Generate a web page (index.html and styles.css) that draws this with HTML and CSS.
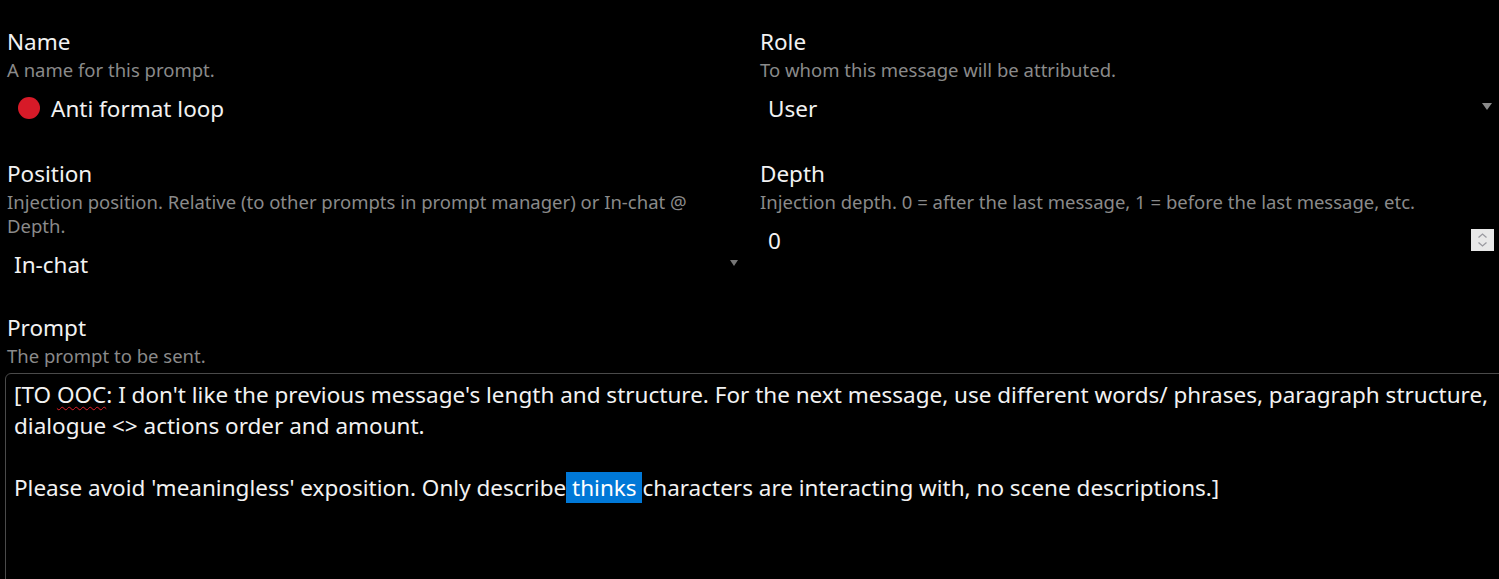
FILE: index.html
```html
<!DOCTYPE html>
<html>
<head>
<meta charset="utf-8">
<link rel="stylesheet" href="styles.css">
</head>
<body>
<div class="page">
  <div class="grid">
    <div class="field">
      <div class="label">Name</div>
      <div class="desc">A name for this prompt.</div>
      <div class="control name-control">
        <span class="dot"></span>
        <span class="value">Anti format loop</span>
      </div>
    </div>
    <div class="field">
      <div class="label">Role</div>
      <div class="desc">To whom this message will be attributed.</div>
      <div class="control select">
        <span class="value">User</span>
        <span class="arrow"></span>
      </div>
    </div>
    <div class="field">
      <div class="label">Position</div>
      <div class="desc">Injection position. Relative (to other prompts in prompt manager) or In-chat @ Depth.</div>
      <div class="control select select-left">
        <span class="value">In-chat</span>
        <span class="arrow arrow-dim"></span>
      </div>
    </div>
    <div class="field">
      <div class="label">Depth</div>
      <div class="desc">Injection depth. 0 = after the last message, 1 = before the last message, etc.</div>
      <div class="control number">
        <span class="value">0</span>
        <span class="spinner">
          <svg width="23" height="22" viewBox="0 0 23 22">
            <path d="M7.5 8.5 L11.5 5 L15.5 8.5" fill="none" stroke="#9a9aa0" stroke-width="1.3"/>
            <path d="M7.5 13.5 L11.5 17 L15.5 13.5" fill="none" stroke="#9a9aa0" stroke-width="1.3"/>
          </svg>
        </span>
      </div>
    </div>
  </div>
  <div class="field prompt-field">
    <div class="label">Prompt</div>
    <div class="desc">The prompt to be sent.</div>
    <div class="textarea"><span>[TO <span class="misspelled">OOC</span>: I don't like the previous message's length and structure. For the next message, use different words/ phrases, paragraph structure,</span>
<span>dialogue &lt;&gt; actions order and amount.</span>

<span>Please avoid 'meaningless' exposition. Only describe<span class="sel"> thinks </span>characters are interacting with, no scene descriptions.]</span></div>
  </div>
</div>
</body>
</html>
```
FILE: styles.css
```css
html, body {
  margin: 0;
  padding: 0;
  background: #000;
  overflow: hidden;
}
body {
  font-family: "Noto Sans", "Open Sans", sans-serif;
  color: #f2f2f2;
  width: 1499px;
  height: 579px;
}
.page {
  padding: 27px 0 0 7px;
  width: 1491px;
}
.grid {
  display: grid;
  grid-template-columns: 1fr 1fr;
  column-gap: 15px;
  row-gap: 31px;
}
.field {
  display: flex;
  flex-direction: column;
}
.label {
  font-size: 22.5px;
  line-height: 30px;
  color: #f2f2f2;
}
.desc {
  font-size: 18.5px;
  line-height: 24px;
  color: #8a8a8a;
  margin-top: 1px;
}
.control {
  margin-top: 6px;
  height: 40px;
  display: flex;
  align-items: center;
  font-size: 22.5px;
  position: relative;
}
.name-control {
  padding-left: 11px;
}
.dot {
  width: 22px;
  height: 22px;
  border-radius: 50%;
  background: #d71a28;
  margin-right: 11px;
}
.select {
  padding-left: 8px;
  justify-content: space-between;
  padding-right: 6px;
}
.select-left {
  padding-left: 7px;
  padding-right: 7px;
}
.arrow {
  width: 0;
  height: 0;
  border-left: 5px solid transparent;
  border-right: 5px solid transparent;
  border-top: 7px solid #8a8a8a;
  margin-top: -3px;
}
.arrow-dim {
  border-left-width: 4px;
  border-right-width: 4px;
  border-top-width: 6px;
  border-top-color: #777;
}
.number {
  padding-left: 8px;
  padding-right: 4px;
  justify-content: space-between;
}
.spinner {
  width: 23px;
  height: 22px;
  background: #e8e8e8;
  display: flex;
}
.prompt-field {
  margin-top: 29px;
}
.textarea {
  margin-top: 5px;
  margin-left: -2px;
  width: 1500px;
  height: 260px;
  border: 1px solid #4a4a4a;
  border-radius: 6px;
  padding: 5px 0 0 8px;
  font-size: 22.5px;
  line-height: 31px;
  white-space: pre;
  color: #f2f2f2;
}
.misspelled {
  text-decoration: underline wavy #e0202a;
  text-decoration-thickness: 1px;
  text-underline-offset: 3px;
}
.sel {
  background: #0078d7;
  color: #fff;
}
```
